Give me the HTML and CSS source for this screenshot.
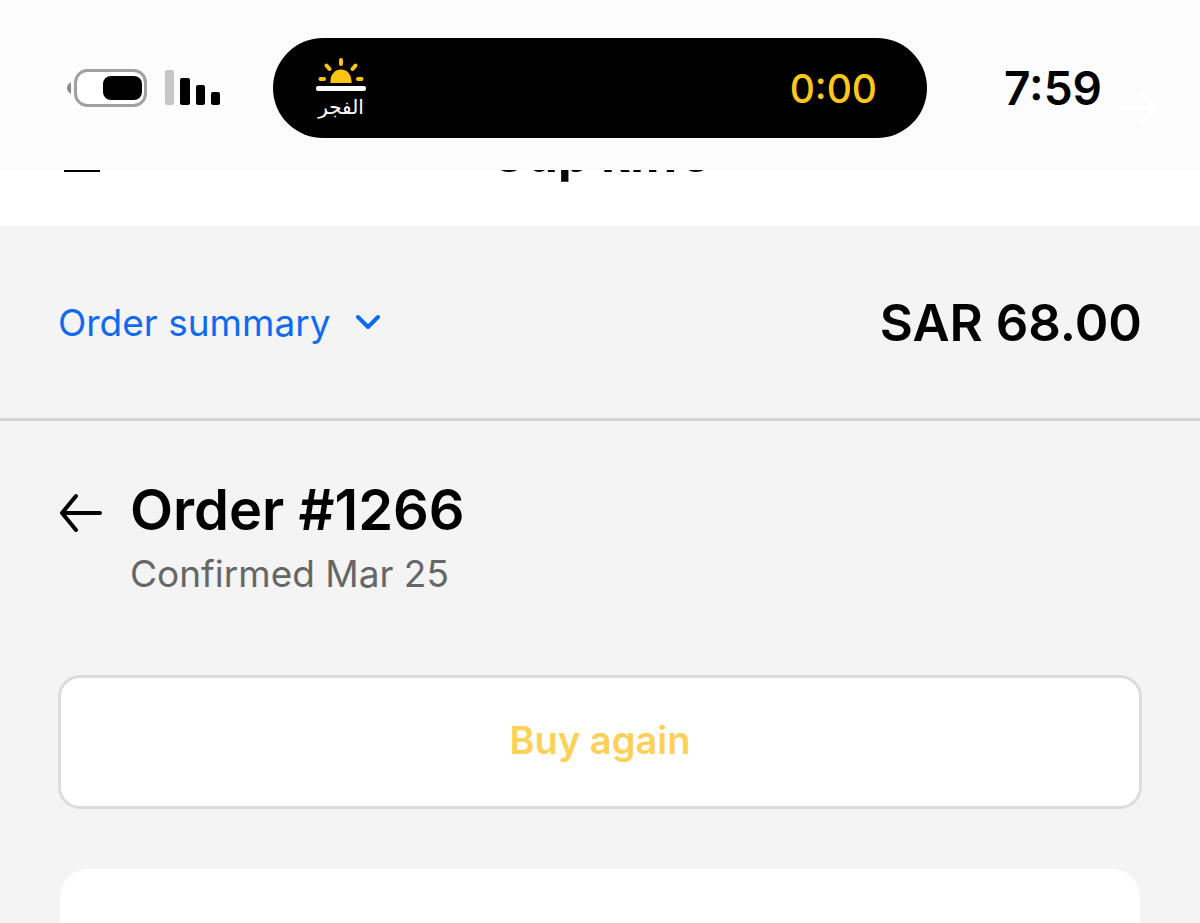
FILE: index.html
```html
<!DOCTYPE html>
<html lang="en">
<head>
  <meta charset="UTF-8" />
  <meta name="viewport" content="width=device-width, initial-scale=1.0"/>
  <title>Order #1266</title>
  <link rel="stylesheet" href="styles.css">
</head>
<body>

  <!-- Status bar, stays above the page -->
  <div class="status-bar">
    <div class="status-icons">
      <svg class="battery" width="80" height="38" viewBox="0 0 80 38">
        <path d="M4 13v12C1 23 0 21 0 19s1-4 4-6z" fill="#8a8a8a"/>
        <rect x="8.500" y="1.500" width="70" height="35" rx="12" fill="#fff" stroke="#a0a0a0" stroke-width="3"/>
        <rect x="36" y="7" width="39" height="24" rx="8"/>
      </svg>
      <svg class="signal" width="56" height="36" viewBox="0 0 56 36">
        <rect x="0" y="0" width="9" height="35" rx="2" fill="#c6c6c6"/>
        <rect x="15" y="8" width="10" height="27" rx="2"/>
        <rect x="31" y="15" width="9" height="20" rx="2"/>
        <rect x="46" y="22" width="9" height="13" rx="2"/>
      </svg>
    </div>

    <div class="island">
      <div class="prayer">
        <svg width="50" height="34" viewBox="0 0 50 34">
          <path d="M14.500 26v-2.500a10.500 11 0 0 1 21 0V26z" fill="#ffc412"/>
          <g stroke="#ffc412" stroke-width="4" stroke-linecap="round">
            <path d="M25 3v4M10.500 8.500l3 3.500M39.500 8.500l-3 3.500M4.500 22H8M42 22h3.500"/>
          </g>
          <rect x="0" y="29" width="50" height="5" rx="2" fill="#fff"/>
        </svg>
        <span class="prayer-name" lang="ar" dir="rtl">الفجر</span>
      </div>
      <span class="timer">0:00</span>
    </div>

    <div class="clock">
      <span>7:59</span>
      <svg class="forward" width="44" height="36" viewBox="0 0 44 36" fill="none" stroke="#fff" stroke-width="4">
        <path d="M0 18h42M26 2l16 16-16 16"/>
      </svg>
    </div>
  </div>

  <header class="shop-header">
    <button class="menu-btn" aria-label="Menu"><span></span><span></span><span></span></button>
    <a class="shop-name" href="#">Cup kiffe</a>
  </header>

  <section class="summary">
    <button class="summary-toggle">
      Order summary
      <svg width="24" height="16" viewBox="0 0 24 16" fill="none" stroke="#0f6af2" stroke-width="4" stroke-linecap="round" stroke-linejoin="round">
        <path d="M2 3l10 10L22 3"/>
      </svg>
    </button>
    <strong class="total">SAR 68.00</strong>
  </section>

  <main>
    <div class="order-head">
      <a class="back" href="#" aria-label="Back">
        <svg width="44" height="40" viewBox="0 0 44 40" fill="none" stroke="#000" stroke-width="4" stroke-linecap="round" stroke-linejoin="round">
          <path d="M42 20H4M18 3L4 20l14 17"/>
        </svg>
      </a>
      <div>
        <h1>Order #1266</h1>
        <p>Confirmed Mar 25</p>
      </div>
    </div>
    <button class="buy-btn">Buy again</button>
    <div class="card"></div>
  </main>

</body>
</html>
```
FILE: styles.css
```css
* {
  box-sizing: border-box;
}
body {
  margin: 0;
  min-height: 100vh;
  display: flex;
  flex-direction: column;
  background: #f4f4f4;
  color: #000;
  font-family: Inter, "Noto Sans", sans-serif;
}
button {
  font-family: inherit;
  cursor: pointer;
}
.status-bar {
  position: fixed;
  top: 0;
  left: 0;
  width: 100%;
  height: 170px;
  padding: 38px 42px 32px;
  display: grid;
  grid-template-columns: 1fr minmax(0, 654px) 1fr;
  align-items: center;
  background: #fcfcfc;
  z-index: 10;
}
.status-icons {
  padding-left: 25px;
  display: flex;
  align-items: center;
  gap: 18px;
}
.island {
  height: 100px;
  padding: 0 50px 0 43px;
  display: flex;
  align-items: center;
  justify-content: space-between;
  background: #000;
  border-radius: 50px;
}
.prayer {
  padding-top: 4px;
  display: flex;
  flex-direction: column;
  align-items: center;
}
.prayer-name {
  font-family: "DejaVu Sans", sans-serif;
  font-size: 20px;
  line-height: 32px;
  color: #fff;
}
.timer {
  font-size: 39px;
  font-weight: 500;
  color: #ffc61c;
}
.clock {
  display: flex;
  align-items: center;
  justify-content: flex-end;
  gap: 12px;
  font-size: 46px;
  font-weight: 600;
}
.forward {
  margin-top: 40px;
}
.shop-header {
  height: 226px;
  padding: 0 60px 42px;
  display: grid;
  grid-template-columns: 1fr auto 1fr;
  align-items: end;
  background: #fff;
}
.menu-btn {
  width: 44px;
  padding: 0 4px 12px;
  display: flex;
  flex-direction: column;
  gap: 9px;
  background: none;
  border: none;
}
.menu-btn span {
  width: 36px;
  height: 3px;
  background: #000;
}
.shop-name {
  font-size: 50px;
  line-height: 60px;
  font-weight: 700;
  color: #000;
  text-decoration: none;
}
.summary {
  height: 195px;
  padding: 0 58px;
  display: flex;
  align-items: center;
  justify-content: space-between;
  border-bottom: 3px solid #d4d4d4;
}
.summary-toggle {
  padding: 0;
  display: flex;
  align-items: center;
  gap: 26px;
  background: none;
  border: none;
  font-size: 37px;
  color: #0f6af2;
}
.total {
  font-size: 51px;
  font-weight: 600;
}
main {
  flex: 1;
  padding: 56px 58px 0;
  display: flex;
  flex-direction: column;
}
.order-head {
  display: flex;
  gap: 28px;
}
.back {
  padding-top: 16px;
}
h1 {
  margin: 0;
  font-size: 56px;
  line-height: 66px;
  font-weight: 600;
}
p {
  margin: 0;
  font-size: 37px;
  line-height: 62px;
  color: #666;
}
.buy-btn {
  height: 134px;
  margin: 70px 0 60px;
  padding: 0 0 4px;
  background: #fff;
  border: 3px solid #dcdcdc;
  border-radius: 22px;
  font-size: 38px;
  font-weight: 600;
  color: #fdd158;
}
.card {
  flex: 1;
  margin: 0 2px;
  background: #fff;
  border-radius: 28px 28px 0 0;
}
```
